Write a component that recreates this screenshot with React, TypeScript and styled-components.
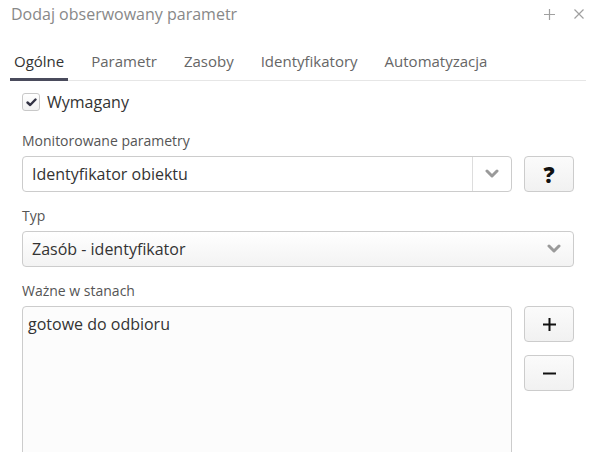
import React, { useState } from 'react';
import styled, { createGlobalStyle } from 'styled-components';

const GlobalStyle = createGlobalStyle`
  html, body {
    margin: 0;
    padding: 0;
    background: #ffffff;
    overflow: hidden;
  }
  body {
    font-family: 'Open Sans', 'Noto Sans', sans-serif;
    color: #333333;
  }
`;

const Wrapper = styled.div`
  width: 593px;
  height: 452px;
  padding: 0 7px 0 10px;
  box-sizing: border-box;
`;

const HeaderWrapper = styled.div`
  height: 28px;
  display: flex;
  align-items: center;
  justify-content: space-between;
  padding-left: 1px;
`;

const Title = styled.div`
  font-size: 16px;
  line-height: 20px;
  color: #888888;
`;

const HeaderButtons = styled.div`
  display: flex;
  align-items: center;
  gap: 19px;
  padding-right: 2px;
  color: #a0a0a0;

  svg {
    display: block;
  }
`;

const TabBar = styled.div`
  margin-top: 14px;
  display: flex;
  gap: 19px;
  border-bottom: 1px solid #e6e6e6;
`;

const Tab = styled.div<{ $active?: boolean }>`
  padding: 9px 4px 7px;
  margin-bottom: -1px;
  font-size: 15px;
  line-height: 20px;
  color: ${(p) => (p.$active ? '#333333' : '#666666')};
  border-bottom: 3px solid ${(p) => (p.$active ? '#4a4b5c' : 'transparent')};
  cursor: pointer;
`;

const Form = styled.div`
  padding: 0 12px;
`;

const CheckRow = styled.label`
  margin-top: 11px;
  height: 20px;
  display: flex;
  align-items: center;
  gap: 7px;
  font-size: 16px;
  line-height: 20px;
  color: #333333;
  cursor: pointer;
`;

const CheckBox = styled.span`
  width: 18px;
  height: 18px;
  box-sizing: border-box;
  border: 1px solid #c8c8c8;
  border-radius: 3px;
  background: linear-gradient(#ffffff, #f2f2f2);
  display: flex;
  align-items: center;
  justify-content: center;
`;

const Field = styled.div<{ $first?: boolean }>`
  margin-top: ${(p) => (p.$first ? '20px' : '15px')};
`;

const Label = styled.div`
  font-size: 14px;
  line-height: 18px;
  color: #555555;
  margin-bottom: 6px;
`;

const Row = styled.div`
  display: flex;
  gap: 12px;
  align-items: flex-start;
`;

const Select = styled.div<{ $plain?: boolean }>`
  flex: 1;
  height: 36px;
  box-sizing: border-box;
  border: 1px solid #cccccc;
  border-radius: 4px;
  background: ${(p) => (p.$plain ? '#ffffff' : 'linear-gradient(#ffffff, #f3f3f3)')};
  display: flex;
  align-items: stretch;
  font-size: 16px;
  line-height: 34px;
  color: #333333;
  cursor: pointer;
`;

const SelectValue = styled.div`
  flex: 1;
  padding: 0 9px;
  white-space: nowrap;
  overflow: hidden;
`;

const SelectArrow = styled.div<{ $divided?: boolean }>`
  width: 38px;
  border-left: ${(p) => (p.$divided ? '1px solid #dddddd' : 'none')};
  display: flex;
  align-items: center;
  justify-content: center;
`;

const SideButton = styled.button`
  width: 50px;
  height: 36px;
  box-sizing: border-box;
  border: 1px solid #cccccc;
  border-radius: 4px;
  background: linear-gradient(#fbfbfb, #f1f1f1);
  display: flex;
  align-items: center;
  justify-content: center;
  padding: 0;
  font-family: 'Open Sans', sans-serif;
  font-size: 22px;
  font-weight: 800;
  color: #111111;
  cursor: pointer;
`;

const ButtonColumn = styled.div`
  display: flex;
  flex-direction: column;
  gap: 13px;
`;

const ListBox = styled.div`
  flex: 1;
  height: 170px;
  box-sizing: border-box;
  border: 1px solid #cccccc;
  border-radius: 4px;
  background: #fcfcfc;
  padding: 6px 5px;
  font-size: 16px;
  line-height: 22px;
  color: #333333;
`;

const Chevron = () => (
  <svg width="14" height="10" viewBox="0 0 14 10">
    <path d="M2 2 L7 7 L12 2" fill="none" stroke="#9a9a9a" strokeWidth="3" strokeLinecap="round" strokeLinejoin="round" />
  </svg>
);

const tabs = ['Ogólne', 'Parametr', 'Zasoby', 'Identyfikatory', 'Automatyzacja'];

export default function App() {
  const [active, setActive] = useState(0);
  const [required, setRequired] = useState(true);

  return (
    <Wrapper>
      <GlobalStyle />
      <HeaderWrapper>
        <Title>Dodaj obserwowany parametr</Title>
        <HeaderButtons>
          <svg width="11" height="11" viewBox="0 0 11 11">
            <path d="M5.5 0 V11 M0 5.5 H11" stroke="currentColor" strokeWidth="1.2" />
          </svg>
          <svg width="10" height="10" viewBox="0 0 10 10">
            <path d="M0.5 0.5 L9.5 9.5 M9.5 0.5 L0.5 9.5" stroke="currentColor" strokeWidth="1.2" />
          </svg>
        </HeaderButtons>
      </HeaderWrapper>

      <TabBar>
        {tabs.map((t, i) => (
          <Tab key={t} $active={i === active} onClick={() => setActive(i)}>
            {t}
          </Tab>
        ))}
      </TabBar>

      <Form>
        <CheckRow onClick={() => setRequired(!required)}>
          <CheckBox>
            {required && (
              <svg width="11" height="9" viewBox="0 0 11 9">
                <path d="M1.5 4.5 L4.2 7 L9.5 1.5" fill="none" stroke="#333344" strokeWidth="2.4" strokeLinecap="round" strokeLinejoin="round" />
              </svg>
            )}
          </CheckBox>
          Wymagany
        </CheckRow>

        <Field $first>
          <Label>Monitorowane parametry</Label>
          <Row>
            <Select $plain>
              <SelectValue>Identyfikator obiektu</SelectValue>
              <SelectArrow $divided>
                <Chevron />
              </SelectArrow>
            </Select>
            <SideButton>?</SideButton>
          </Row>
        </Field>

        <Field>
          <Label>Typ</Label>
          <Select>
            <SelectValue>Zasób - identyfikator</SelectValue>
            <SelectArrow>
              <Chevron />
            </SelectArrow>
          </Select>
        </Field>

        <Field>
          <Label>Ważne w stanach</Label>
          <Row>
            <ListBox>gotowe do odbioru</ListBox>
            <ButtonColumn>
              <SideButton>
                <svg width="13" height="13" viewBox="0 0 13 13">
                  <path d="M6.5 0 V13 M0 6.5 H13" stroke="#111111" strokeWidth="2" />
                </svg>
              </SideButton>
              <SideButton>
                <svg width="13" height="13" viewBox="0 0 13 13">
                  <path d="M0 6.5 H13" stroke="#111111" strokeWidth="2" />
                </svg>
              </SideButton>
            </ButtonColumn>
          </Row>
        </Field>
      </Form>
    </Wrapper>
  );
}
